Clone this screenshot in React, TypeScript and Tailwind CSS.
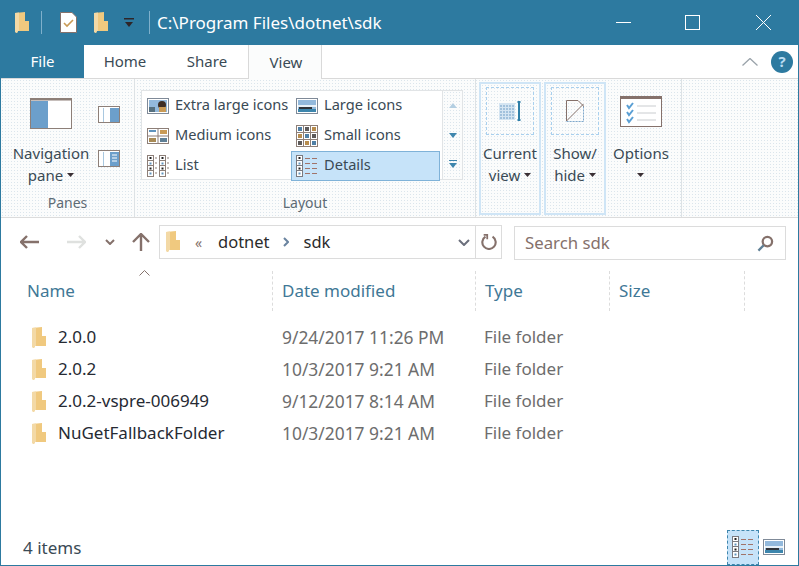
import { ReactNode } from "react"

const dots =
  "bg-[#fbfcfc] bg-[radial-gradient(#dbe5ec_0.6px,transparent_0.7px)] bg-[length:3px_3px]"
const selected =
  "bg-[#c6e3f9] bg-[radial-gradient(#e6f3fc_0.6px,transparent_0.7px)] bg-[length:4px_4px]"

const files = [
  { name: "2.0.0", date: "9/24/2017 11:26 PM" },
  { name: "2.0.2", date: "10/3/2017 9:21 AM" },
  { name: "2.0.2-vspre-006949", date: "9/12/2017 8:14 AM" },
  { name: "NuGetFallbackFolder", date: "10/3/2017 9:21 AM" },
]

function Folder({ className = "" }: { className?: string }) {
  return (
    <svg viewBox="0 0 14 21" className={`w-[14px] h-[21px] shrink-0 ${className}`}>
      <path d="M0 1L10 0V9H14V19H3L2 21L0 20Z" fill="#f0c97f" />
      <path d="M0 1L4 .6V19H3L2 21L0 20Z" fill="#f3d9a6" />
    </svg>
  )
}

function Caret({ className = "" }: { className?: string }) {
  return (
    <svg viewBox="0 0 7 4" className={`inline-block w-[7px] h-[4px] ${className}`}>
      <path d="M0 0H7L3.5 4Z" fill="#3a3035" />
    </svg>
  )
}

function GalleryIcon({ kind }: { kind: "xl" | "md" | "list" | "lg" | "sm" | "details" }) {
  if (kind === "xl" || kind === "lg") {
    return (
      <svg viewBox="0 0 22 16" className="w-[22px] h-[16px] shrink-0">
        <rect x="0.5" y="0.5" width="21" height="15" fill="#fff" stroke="#7f8a98" />
        <rect x="2" y="2" width="18" height="12" fill="#93b9dc" />
        {kind === "xl" ? (
          <>
            <rect x="2" y="9" width="6" height="5" fill="#56707f" />
            <circle cx="15" cy="7" r="4" fill="#3d2d24" />
            <rect x="12" y="9" width="7" height="5" fill="#c99a55" />
          </>
        ) : (
          <>
            <rect x="2" y="7" width="18" height="2" fill="#e8f1f8" />
            <rect x="3" y="9" width="13" height="2" fill="#30343a" />
            <rect x="2" y="11" width="18" height="3" fill="#3d86ad" />
          </>
        )}
      </svg>
    )
  }
  if (kind === "md") {
    return (
      <svg viewBox="0 0 22 16" className="w-[22px] h-[16px] shrink-0">
        <rect x="0.5" y="0.5" width="21" height="15" fill="#fff" stroke="#8d7f78" />
        <path d="M11 0V16M0 8H22" stroke="#8d7f78" />
        <rect x="2" y="2" width="7" height="2" fill="#5f93bd" />
        <rect x="13" y="2" width="7" height="4" fill="#c99a55" />
        <rect x="2" y="10" width="7" height="4" fill="#a88a55" />
        <rect x="13" y="10" width="7" height="4" fill="#5f7f95" />
      </svg>
    )
  }
  if (kind === "sm") {
    return (
      <svg viewBox="0 0 22 22" className="w-[22px] h-[22px] shrink-0">
        <rect x="0.5" y="0.5" width="21" height="21" fill="#fff" stroke="#8d7f78" />
        <path d="M7.5 0V22M14.5 0V22M0 7.5H22M0 14.5H22" stroke="#8d7f78" />
        <rect x="2" y="2" width="4" height="4" fill="#4f7fa5" />
        <rect x="9" y="2" width="4" height="4" fill="#5d5a5a" />
        <rect x="16" y="2" width="4" height="4" fill="#b78c4d" />
        <rect x="2" y="9" width="4" height="4" fill="#b78c4d" />
        <rect x="9" y="9" width="4" height="4" fill="#4f7fa5" />
        <rect x="16" y="9" width="4" height="4" fill="#5d5a5a" />
        <rect x="2" y="16" width="4" height="4" fill="#5d5a5a" />
        <rect x="9" y="16" width="4" height="4" fill="#b78c4d" />
        <rect x="16" y="16" width="4" height="4" fill="#4f7fa5" />
      </svg>
    )
  }
  if (kind === "list") {
    return (
      <svg viewBox="0 0 22 22" className="w-[22px] h-[22px] shrink-0">
        {[0, 1].map((c) => (
          <g key={c} transform={`translate(${c * 12} 0)`}>
            <rect x="0.5" y="0.5" width="6" height="21" fill="#fff" stroke="#8d7f78" />
            <path d="M0 5.5H7M0 10.5H7M0 15.5H7" stroke="#8d7f78" />
            <path d="M8 3H10M8 8H10M8 13H10M8 18H10" stroke="#8d7f78" />
            <rect x="2.5" y="2" width="2" height="2" fill="#222" />
            <rect x="2.5" y="7.5" width="2" height="2" fill="#5f93bd" />
            <rect x="2.5" y="12.5" width="2" height="2" fill="#222" />
            <rect x="2.5" y="17.5" width="2" height="2" fill="#5f93bd" />
          </g>
        ))}
      </svg>
    )
  }
  return <DetailsGlyph />
}

function DetailsGlyph() {
  return (
    <svg viewBox="0 0 22 22" className="w-[22px] h-[22px] shrink-0">
      <rect x="0.5" y="0.5" width="6" height="21" fill="#fff" stroke="#7a7a80" />
      <path d="M0 5.5H7M0 10.5H7M0 15.5H7" stroke="#7a7a80" />
      <rect x="2.5" y="2" width="2" height="2" fill="#222" />
      <rect x="2.5" y="7.5" width="2" height="2" fill="#5f93bd" />
      <rect x="2.5" y="12.5" width="2" height="2" fill="#222" />
      <rect x="2.5" y="17.5" width="2" height="2" fill="#5f93bd" />
      <path d="M9 3.5H14M16 3.5H21M9 8.5H14M16 8.5H21M9 13.5H14M16 13.5H21M9 18.5H14M16 18.5H21" stroke="#a1746a" />
    </svg>
  )
}

function GalleryItem({ kind, label, active }: { kind: "xl" | "md" | "list" | "lg" | "sm" | "details"; label: string; active?: boolean }) {
  return (
    <div
      className={`h-[30px] flex items-center gap-[6px] pl-[4px] border whitespace-nowrap text-[14.6px] ${
        active ? `${selected} border-[#7fb2d8]` : "border-transparent"
      }`}
    >
      <div className="w-[22px] flex justify-center">
        <GalleryIcon kind={kind} />
      </div>
      <span className="text-[#3a4a55] mb-[3px]">{label}</span>
    </div>
  )
}

function BigButton({ icon, lines, active, width }: { icon: ReactNode; lines: ReactNode[]; active?: boolean; width: string }) {
  return (
    <div
      className={`${width} h-[133px] mt-[3px] flex flex-col items-center border-2 ${
        active ? `border-[#cfe5f6] ${dots}` : "border-transparent"
      }`}
    >
      <div
        className={`w-[48px] h-[48px] mt-[3px] flex items-center justify-center ${
          active ? "border border-dashed border-[#a9d0ee]" : ""
        }`}
      >
        {icon}
      </div>
      <div className="mt-[7px] leading-[22px] text-center text-[#3a4a55]">
        {lines.map((l, i) => (
          <div key={i}>{l}</div>
        ))}
      </div>
    </div>
  )
}

export default function App() {
  return (
    <div className="w-[799px] h-[566px] flex flex-col bg-white border-x border-b border-[#2d7aa0] overflow-hidden text-[15px] font-['Noto_Sans','Open_Sans',sans-serif]">
      {/* title bar */}
      <div className="h-[45px] shrink-0 bg-[#2d7aa0] flex items-center text-white">
        <Folder className="ml-[14px]" />
        <div className="w-px h-[23px] bg-[#7fb0cb] ml-[12px]" />
        <svg viewBox="0 0 17 21" className="w-[17px] h-[21px] ml-[18px]">
          <path d="M.5.5H12L16.5 5V20.5H.5Z" fill="#fff" stroke="#85716b" />
          <path d="M4 11L7 14L13 8" fill="none" stroke="#c99a55" strokeWidth="1.6" />
        </svg>
        <Folder className="ml-[17px]" />
        <svg viewBox="0 0 10 10" className="w-[10px] h-[10px] ml-[16px]">
          <rect x="0" y="0" width="10" height="1.5" fill="#2e2528" />
          <path d="M1 4H9L5 9Z" fill="#2e2528" />
        </svg>
        <div className="w-px h-[23px] bg-[#7fb0cb] ml-[15px]" />
        <span className="ml-[7px] text-[17px]">C:\Program Files\dotnet\sdk</span>
        <div className="ml-auto flex items-center">
          <div className="w-[15px] h-px bg-white mr-[54px]" />
          <div className="w-[15px] h-[15px] border border-white mr-[56px]" />
          <svg viewBox="0 0 15 15" className="w-[15px] h-[15px] mr-[27px]">
            <path d="M0 0L15 15M15 0L0 15" stroke="#fff" />
          </svg>
        </div>
      </div>

      {/* tabs */}
      <div className="h-[34px] shrink-0 flex border-b border-[#d9d9d9] text-[#3a4a55]">
        <div className="w-[84px] -ml-px bg-[#2d7aa0] text-white flex items-center justify-center pl-[1px]">File</div>
        <div className="w-[82px] flex items-center justify-center">Home</div>
        <div className="w-[82px] flex items-center justify-center">Share</div>
        <div className="w-[74px] -mb-px bg-[#fbfcfc] border-x border-[#d9d9d9] flex items-center justify-center pl-[2px]">View</div>
        <div className="ml-auto flex items-center">
          <svg viewBox="0 0 16 8" className="w-[16px] h-[8px] mr-[13px]">
            <path d="M.5 7.5L8 .5L15.5 7.5" fill="none" stroke="#9aa3aa" strokeWidth="1.3" />
          </svg>
          <div className="w-[22px] h-[22px] rounded-full bg-[#2d7aa0] text-[#b9dcf2] font-bold text-[15px] flex items-center justify-center mr-[5px]">?</div>
        </div>
      </div>

      {/* ribbon */}
      <div className={`h-[139px] shrink-0 flex border-b border-[#dcdcdc] ${dots}`}>
        <div className="w-[134px] border-r border-[#dde2e5] flex flex-col">
          <div className="flex-1 flex">
            <div className="w-[90px] ml-[5px] flex flex-col items-center">
              <svg viewBox="0 0 42 31" className="w-[42px] h-[31px] mt-[19px]">
                <rect x=".5" y=".5" width="41" height="30" fill="#fff" stroke="#8d7f78" />
                <rect x="1" y="3" width="17" height="27" fill="#6c9fcb" />
                <rect x="1" y="1" width="40" height="1.5" fill="#8d7f78" />
              </svg>
              <div className="mt-[13px] leading-[22px] text-center text-[#3a4a55]">
                <div>Navigation</div>
                <div>
                  pane <Caret className="mb-[3px]" />
                </div>
              </div>
            </div>
            <div className="ml-[2px] mt-[27px] flex flex-col gap-[27px]">
              <svg viewBox="0 0 22 17" className="w-[22px] h-[17px]">
                <rect x=".5" y=".5" width="21" height="16" fill="#fff" stroke="#8d7f78" />
                <rect x="12" y="2" width="9" height="14" fill="#6c9fcb" />
                <path d="M5.5 2V16" stroke="#a9c8e0" />
              </svg>
              <svg viewBox="0 0 22 17" className="w-[22px] h-[17px]">
                <rect x=".5" y=".5" width="21" height="16" fill="#fff" stroke="#8d7f78" />
                <rect x="12" y="2" width="9" height="14" fill="#6c9fcb" />
                <path d="M5.5 2V16" stroke="#a9c8e0" />
                <path d="M14 5H19M14 8H19M14 11H19" stroke="#fff" />
              </svg>
            </div>
          </div>
          <div className="h-[29px] pt-[4px] text-center text-[#5d6b75] text-[14px]">Panes</div>
        </div>

        <div className="w-[341px] border-r border-[#dde2e5] flex flex-col">
          <div className="flex-1 pl-[6px] pt-[11px]">
            <div className="w-[322px] h-[90px] bg-white border border-[#e1e4e6] flex">
              <div className="w-[149px]">
                <GalleryItem kind="xl" label="Extra large icons" />
                <GalleryItem kind="md" label="Medium icons" />
                <GalleryItem kind="list" label="List" />
              </div>
              <div className="w-[149px]">
                <GalleryItem kind="lg" label="Large icons" />
                <GalleryItem kind="sm" label="Small icons" />
                <GalleryItem kind="details" label="Details" active />
              </div>
              <div className={`flex-1 ml-[2px] border-l border-[#e1e4e6] flex flex-col items-center pt-[12px] ${dots}`}>
                <svg viewBox="0 0 8 5" className="w-[8px] h-[5px]"><path d="M0 5L4 0L8 5Z" fill="#b4cfe2" /></svg>
                <svg viewBox="0 0 8 5" className="w-[8px] h-[5px] mt-[25px]"><path d="M0 0L4 5L8 0Z" fill="#3f86ad" /></svg>
                <div className="w-[8px] h-[1px] bg-[#3f86ad] mt-[22px]" />
                <svg viewBox="0 0 8 5" className="w-[8px] h-[5px] mt-[2px]"><path d="M0 0L4 5L8 0Z" fill="#3f86ad" /></svg>
              </div>
            </div>
          </div>
          <div className="h-[29px] pt-[4px] text-center text-[#5d6b75] text-[14px]">Layout</div>
        </div>

        <div className="flex pl-[3px] gap-[3px]">
          <BigButton
            active
            width="w-[62px]"
            icon={
              <svg viewBox="0 0 23 22" className="w-[23px] h-[22px]">
                <rect x="0" y="3" width="16" height="17" fill="#d5e5f2" />
                <path d="M1 6H15M1 9H15M1 12H15M1 15H15M1 18H15" stroke="#6f9dc6" strokeDasharray="2 1" />
                <path d="M20 1V21" stroke="#2f7fa8" strokeWidth="2" />
                <path d="M18 2H22M18 20H22" stroke="#2f7fa8" />
              </svg>
            }
            lines={["Current", <>view <Caret className="mb-[3px]" /></>]}
          />
          <BigButton
            active
            width="w-[62px]"
            icon={
              <svg viewBox="0 0 18 22" className="w-[18px] h-[22px]">
                <path d="M.5 21V.5H12L17.500 6V7" fill="none" stroke="#85716b" />
                <path d="M.5 21L17.500 4" stroke="#85716b" />
                <path d="M.5 21.500H17.500V6" fill="none" stroke="#7fa8cc" strokeDasharray="2 1" />
              </svg>
            }
            lines={["Show/", <>hide <Caret className="mb-[3px]" /></>]}
          />
          <BigButton
            width="w-[64px]"
            icon={
              <svg viewBox="0 0 42 31" className="w-[42px] h-[31px]">
                <rect x=".5" y=".5" width="41" height="30" fill="#fff" stroke="#85716b" />
                <rect x="1" y="1" width="40" height="2" fill="#85716b" />
                <path d="M7 9L9 12L13 7M7 16L9 19L13 14M7 23L9 26L13 21" fill="none" stroke="#5a9fd4" strokeWidth="2" />
                <path d="M17 10H36M17 17H36M17 24H36" stroke="#c9cccf" />
              </svg>
            }
            lines={["Options", <Caret className="mb-[3px]" />]}
          />
        </div>
        <div className="w-px bg-[#dde2e5] ml-[8px]" />
      </div>

      {/* address row */}
      <div className="h-[48px] shrink-0 flex items-start pt-[7px]">
        <div className="w-[158px] h-[34px] flex items-center">
          <svg viewBox="0 0 20 14" className="w-[20px] h-[14px] ml-[19px]">
            <path d="M1 7H19M7 1L1 7L7 13" fill="none" stroke="#85716b" strokeWidth="2.400" />
          </svg>
          <svg viewBox="0 0 20 14" className="w-[20px] h-[14px] ml-[26px]">
            <path d="M1 7H19M13 1L19 7L13 13" fill="none" stroke="#dfe1df" strokeWidth="2.400" />
          </svg>
          <svg viewBox="0 0 10 6" className="w-[10px] h-[6px] ml-[19px]">
            <path d="M1 1L5 5L9 1" fill="none" stroke="#85716b" strokeWidth="2" />
          </svg>
          <svg viewBox="0 0 18 18" className="w-[18px] h-[18px] ml-[17px]">
            <path d="M9 18V1M1 9L9 1L17 9" fill="none" stroke="#85716b" strokeWidth="2.400" />
          </svg>
        </div>
        <div className="w-[343px] h-[34px] border border-[#dcdcdc] flex items-center text-[16.5px]">
          <Folder className="ml-[6px] mb-[1px]" />
          <span className="ml-[15px] text-[#85716b] text-[14px] w-[10px]">«</span>
          <span className="ml-[13px] text-[#2b2b2b]">dotnet</span>
          <svg viewBox="0 0 6 10" className="w-[6px] h-[10px] ml-[13px]">
            <path d="M1 1L5 5L1 9" fill="none" stroke="#6a84a0" strokeWidth="2" />
          </svg>
          <span className="ml-[15px] text-[#2b2b2b]">sdk</span>
          <svg viewBox="0 0 12 7" className="w-[12px] h-[7px] ml-auto mr-[5px]">
            <path d="M1 1L6 6L11 1" fill="none" stroke="#6b6f7c" strokeWidth="2" />
          </svg>
          <div className="w-[26px] h-full border-l border-[#dcdcdc] flex items-center justify-center">
            <svg viewBox="0 0 18 18" className="w-[16px] h-[16px]">
              <path d="M5 3A7.500 7.500 0 1 0 13 3" fill="none" stroke="#85716b" strokeWidth="2.400" />
              <path d="M3 1H7V6" fill="none" stroke="#85716b" strokeWidth="2" />
            </svg>
          </div>
        </div>
        <div className="w-[272px] h-[34px] ml-[12px] mt-px border border-[#dcdcdc] flex items-center pl-[10px] text-[#85716b] text-[16.8px]">
          Search sdk
          <svg viewBox="0 0 18 18" className="w-[17px] h-[17px] ml-auto mr-[11px]">
            <circle cx="11" cy="7" r="5" fill="none" stroke="#85716b" strokeWidth="2.400" />
            <path d="M7 11L1.500 16.500" stroke="#5f7f95" strokeWidth="2.400" />
          </svg>
        </div>
      </div>

      {/* column headers */}
      <div className="h-[48px] shrink-0 relative flex items-center pt-[2px] text-[#3f7896] text-[17px]">
        <svg viewBox="0 0 11 6" className="absolute left-[138px] top-[4px] w-[11px] h-[6px]">
          <path d="M.5 5.500L5.500 .5L10.500 5.500" fill="none" stroke="#85716b" />
        </svg>
        <div className="w-[272px] h-[40px] flex items-center pl-[26px] border-r border-dashed border-[#dcdcdc]">Name</div>
        <div className="w-[203px] h-[40px] flex items-center pl-[9px] border-r border-dashed border-[#dcdcdc]">Date modified</div>
        <div className="w-[134px] h-[40px] flex items-center pl-[9px] border-r border-dashed border-[#dcdcdc]">Type</div>
        <div className="w-[135px] h-[40px] flex items-center pl-[9px] border-r border-dashed border-[#dcdcdc]">Size</div>
      </div>

      {/* file rows */}
      <div className="flex-1 pt-[7px] text-[17px]">
        {files.map((f) => (
          <div key={f.name} className="h-[32px] flex items-center">
            <div className="w-[271px] flex items-center pl-[31px]">
              <Folder />
              <span className="ml-[12px] text-[#262a33]">{f.name}</span>
            </div>
            <div className="w-[203px] pl-[10px] text-[#6d6d6d] text-[17.4px]">{f.date}</div>
            <div className="pl-[9px] text-[#6d6d6d]">File folder</div>
          </div>
        ))}
      </div>

      {/* status bar */}
      <div className="h-[36px] shrink-0 flex items-center pl-[22px] text-[#3a4a55] text-[17px]">
        <span className="mt-[2px]">4 items</span>
        <div className={`ml-auto w-[32px] h-[35px] ${selected} border border-dashed border-[#3f86ad] flex items-center justify-center`}>
          <DetailsGlyph />
        </div>
        <div className="ml-[4px] mr-[13px] w-[22px] h-[17px] flex items-center">
          <GalleryIcon kind="lg" />
        </div>
      </div>
    </div>
  )
}
